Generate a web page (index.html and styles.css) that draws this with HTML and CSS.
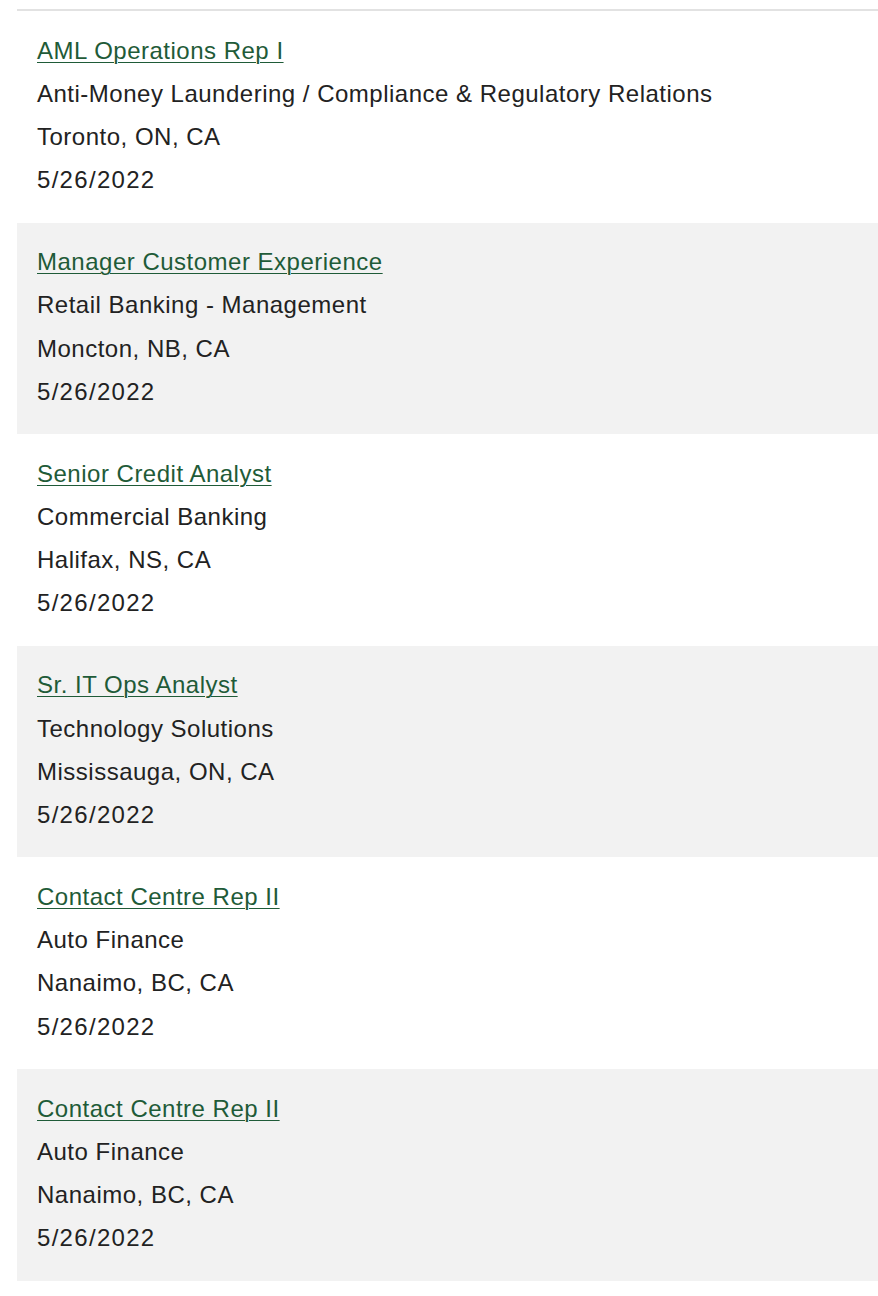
FILE: index.html
```html
<!DOCTYPE html>
<html>
<head>
<meta charset="utf-8">
<link rel="stylesheet" href="styles.css">
</head>
<body>
<ul class="jobs">
  <li class="job">
    <a class="title" href="#">AML Operations Rep I</a>
    <div class="line">Anti-Money Laundering / Compliance &amp; Regulatory Relations</div>
    <div class="line">Toronto, ON, CA</div>
    <div class="line date">5/26/2022</div>
  </li>
  <li class="job alt">
    <a class="title" href="#">Manager Customer Experience</a>
    <div class="line">Retail Banking - Management</div>
    <div class="line">Moncton, NB, CA</div>
    <div class="line date">5/26/2022</div>
  </li>
  <li class="job">
    <a class="title" href="#">Senior Credit Analyst</a>
    <div class="line">Commercial Banking</div>
    <div class="line">Halifax, NS, CA</div>
    <div class="line date">5/26/2022</div>
  </li>
  <li class="job alt">
    <a class="title" href="#">Sr. IT Ops Analyst</a>
    <div class="line">Technology Solutions</div>
    <div class="line">Mississauga, ON, CA</div>
    <div class="line date">5/26/2022</div>
  </li>
  <li class="job">
    <a class="title" href="#">Contact Centre Rep II</a>
    <div class="line">Auto Finance</div>
    <div class="line">Nanaimo, BC, CA</div>
    <div class="line date">5/26/2022</div>
  </li>
  <li class="job alt">
    <a class="title" href="#">Contact Centre Rep II</a>
    <div class="line">Auto Finance</div>
    <div class="line">Nanaimo, BC, CA</div>
    <div class="line date">5/26/2022</div>
  </li>
</ul>
</body>
</html>
```
FILE: styles.css
```css
html, body {
  margin: 0;
  padding: 0;
  background: #ffffff;
}
body {
  font-family: "Liberation Sans", Arial, sans-serif;
  font-size: 24px;
  letter-spacing: 0.5px;
  color: #222222;
}
.jobs {
  list-style: none;
  margin: 9px 0 0 17px;
  padding: 0;
  border-top: 2px solid #e2e2e2;
}
.job {
  padding: 17.6px 20px 21.2px;
  line-height: 43.2px;
}
.job.alt {
  background: #f2f2f2;
}
.title {
  display: block;
  width: max-content;
  color: #1f5b38;
  text-decoration: underline;
  text-underline-offset: 3px;
  text-decoration-thickness: 1px;
}
.line {
  white-space: nowrap;
}
.date {
  letter-spacing: 1.3px;
}
```
